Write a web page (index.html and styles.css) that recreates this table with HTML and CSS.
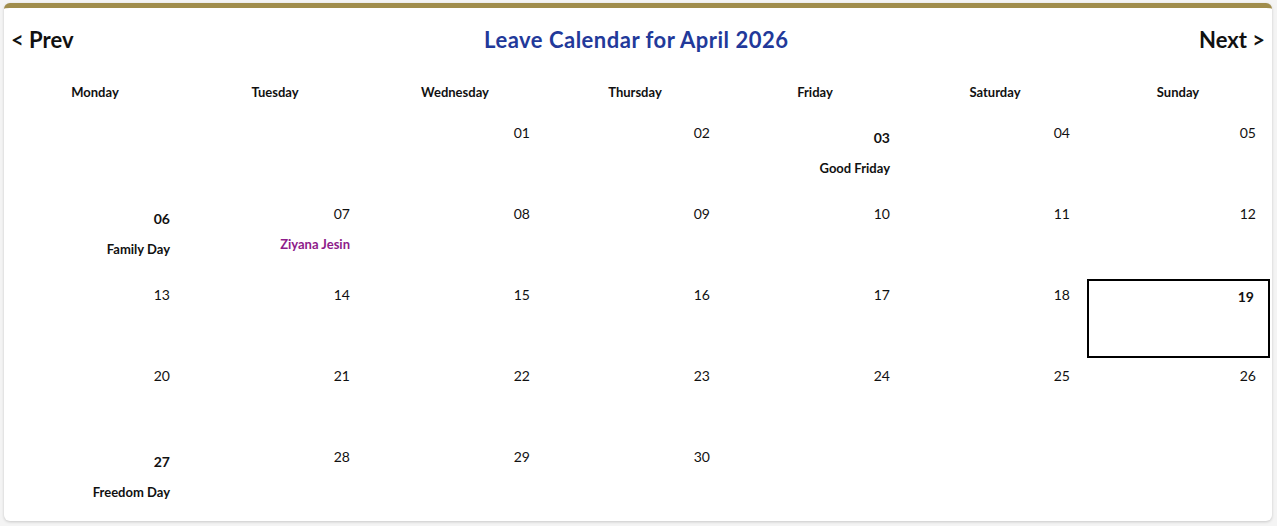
FILE: index.html
```html
<!DOCTYPE html>
<html lang="en">
<head>
<meta charset="utf-8">
<title>Leave Calendar</title>
<link rel="stylesheet" href="styles.css">
</head>
<body>
<div class="card">
  <div class="cal-header">
    <a class="nav">&lt; Prev</a>
    <h1 class="title">Leave Calendar for April 2026</h1>
    <a class="nav">Next &gt;</a>
  </div>
  <div class="grid">
    <div class="dow">Monday</div>
    <div class="dow">Tuesday</div>
    <div class="dow">Wednesday</div>
    <div class="dow">Thursday</div>
    <div class="dow">Friday</div>
    <div class="dow">Saturday</div>
    <div class="dow">Sunday</div>

    <div class="cell empty"></div>
    <div class="cell empty"></div>
    <div class="cell"><div class="num">01</div></div>
    <div class="cell"><div class="num">02</div></div>
    <div class="cell holiday"><div class="num">03</div><div class="hname">Good Friday</div></div>
    <div class="cell"><div class="num">04</div></div>
    <div class="cell"><div class="num">05</div></div>

    <div class="cell holiday"><div class="num">06</div><div class="hname">Family Day</div></div>
    <div class="cell"><div class="num">07</div><div class="leave">Ziyana Jesin</div></div>
    <div class="cell"><div class="num">08</div></div>
    <div class="cell"><div class="num">09</div></div>
    <div class="cell"><div class="num">10</div></div>
    <div class="cell"><div class="num">11</div></div>
    <div class="cell"><div class="num">12</div></div>

    <div class="cell"><div class="num">13</div></div>
    <div class="cell"><div class="num">14</div></div>
    <div class="cell"><div class="num">15</div></div>
    <div class="cell"><div class="num">16</div></div>
    <div class="cell"><div class="num">17</div></div>
    <div class="cell"><div class="num">18</div></div>
    <div class="cell today"><div class="num">19</div></div>

    <div class="cell"><div class="num">20</div></div>
    <div class="cell"><div class="num">21</div></div>
    <div class="cell"><div class="num">22</div></div>
    <div class="cell"><div class="num">23</div></div>
    <div class="cell"><div class="num">24</div></div>
    <div class="cell"><div class="num">25</div></div>
    <div class="cell"><div class="num">26</div></div>

    <div class="cell holiday"><div class="num">27</div><div class="hname">Freedom Day</div></div>
    <div class="cell"><div class="num">28</div></div>
    <div class="cell"><div class="num">29</div></div>
    <div class="cell"><div class="num">30</div></div>
    <div class="cell empty"></div>
    <div class="cell empty"></div>
    <div class="cell empty"></div>
  </div>
</div>
</body>
</html>
```

FILE: styles.css
```css
* { box-sizing: border-box; }
html, body { height: 100%; }
body {
  margin: 0;
  padding: 3px 5px 5px 4px;
  background: #f4f4f4;
  font-family: "Lato", "Open Sans", sans-serif;
  color: #111;
}
.card {
  background: #fff;
  border-top: 5px solid #a08d4c;
  border-radius: 6px;
  box-shadow: 0 1px 3px rgba(0,0,0,0.18);
  height: 518px;
  overflow: hidden;
}
.cal-header {
  display: flex;
  justify-content: space-between;
  align-items: flex-start;
  padding: 18px 7px 0 7px;
  height: 60px;
}
.nav {
  font-size: 22px;
  font-weight: 700;
  line-height: 28px;
  color: #111;
  cursor: pointer;
}
.title {
  margin: 0;
  font-size: 22px;
  font-weight: 700;
  line-height: 28px;
  letter-spacing: 0.5px;
  color: #22399a;
}
.grid {
  display: grid;
  grid-template-columns: repeat(6, 180px) 1fr;
  grid-template-rows: 48px repeat(5, 81px);
  margin: 0 1px;
}
.dow {
  display: flex;
  align-items: center;
  justify-content: center;
  font-size: 13px;
  font-weight: 700;
}
.cell {
  text-align: right;
  padding: 0 15px;
  font-size: 14px;
}
.num {
  line-height: 20px;
  padding-top: 7px;
}
.leave {
  margin-top: 10px;
  line-height: 20px;
  font-size: 13px;
  font-weight: 700;
  color: #8e1b8a;
}
.holiday .num {
  padding-top: 12px;
  font-weight: 700;
}
.hname {
  margin-top: 10px;
  line-height: 20px;
  font-size: 13px;
  font-weight: 700;
}
.today {
  border: 2px solid #000;
  margin: 1px 1px 1px 2px;
  padding: 0 14px;
}
.today .num {
  font-weight: 700;
  padding-top: 6px;
}
```
